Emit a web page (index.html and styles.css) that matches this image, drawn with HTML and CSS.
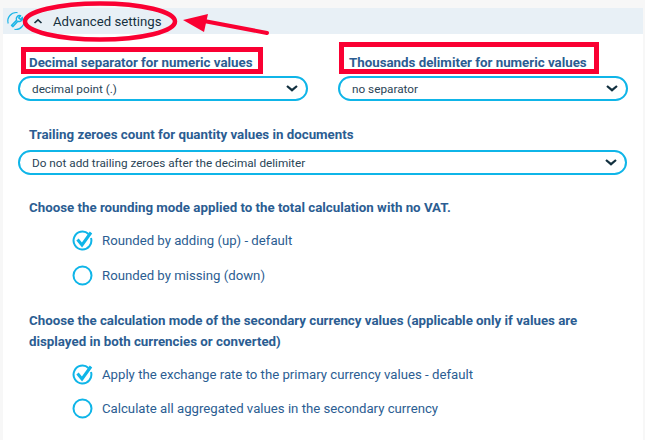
FILE: index.html
```html
<!DOCTYPE html>
<html lang="en">
<head>
<meta charset="utf-8">
<title>Advanced settings</title>
<link rel="stylesheet" href="styles.css">
</head>
<body>
<main class="panel">
  <header class="bar">
    <svg class="wrench" width="20" height="20" viewBox="0 0 20 20" fill="none">
      <path d="M2.2 12.5A8.5 8.5 0 0 1 11.5 1.6" stroke="#1cb5e6" stroke-width="1.2"/>
      <path d="M17.8 7.5A8.5 8.5 0 0 1 8.5 18.4" stroke="#1cb5e6" stroke-width="1.2"/>
      <path d="M5.5 14.5L10.5 9.2A3.3 3.3 0 0 1 14.6 4.8L12.7 6.9L14.6 8.4L16.3 6.4A3.3 3.3 0 0 1 11.8 10.3L7 15.6Z" stroke="#1cb5e6" stroke-width="1.5" stroke-linejoin="round"/>
    </svg>
    <svg class="caret" width="10" height="6" viewBox="0 0 10 6" fill="none"><path d="M1.5 5L5 1.8L8.5 5" stroke="#16303f" stroke-width="1.6"/></svg>
    <span class="bar-title">Advanced settings</span>
  </header>

  <div class="columns">
    <div class="field">
      <label class="label">Decimal separator for numeric values</label>
      <div class="select"><span>decimal point (.)</span><svg class="chev" width="12" height="7" viewBox="0 0 12 7" fill="none"><path d="M1 1L6 5.2L11 1" stroke="#12303f" stroke-width="2.2"/></svg></div>
    </div>
    <div class="field">
      <label class="label">Thousands delimiter for numeric values</label>
      <div class="select"><span>no separator</span><svg class="chev" width="12" height="7" viewBox="0 0 12 7" fill="none"><path d="M1 1L6 5.2L11 1" stroke="#12303f" stroke-width="2.2"/></svg></div>
    </div>
  </div>

  <div class="field wide">
    <label class="label">Trailing zeroes count for quantity values in documents</label>
    <div class="select"><span>Do not add trailing zeroes after the decimal delimiter</span><svg class="chev" width="12" height="7" viewBox="0 0 12 7" fill="none"><path d="M1 1L6 5.2L11 1" stroke="#12303f" stroke-width="2.2"/></svg></div>
  </div>

  <section class="group first">
    <p class="label">Choose the rounding mode applied to the total calculation with no VAT.</p>
    <div class="options">
      <div class="option">
        <svg class="radio" width="21" height="21" viewBox="0 0 21 21" fill="none"><path d="M16.5 4A8.9 8.9 0 1 0 19 8" stroke="#0fb5e8" stroke-width="2"/><path d="M5.5 9.5L10 15L19 2.5" stroke="#0fb5e8" stroke-width="3"/></svg>
        <span>Rounded by adding (up) - default</span>
      </div>
      <div class="option">
        <svg class="radio" width="21" height="21" viewBox="0 0 21 21" fill="none"><circle cx="10.5" cy="10.5" r="9" stroke="#0fb5e8" stroke-width="2"/></svg>
        <span>Rounded by missing (down)</span>
      </div>
    </div>
  </section>

  <section class="group second">
    <p class="label">Choose the calculation mode of the secondary currency values (applicable only if values are displayed in both currencies or converted)</p>
    <div class="options">
      <div class="option">
        <svg class="radio" width="21" height="21" viewBox="0 0 21 21" fill="none"><path d="M16.5 4A8.9 8.9 0 1 0 19 8" stroke="#0fb5e8" stroke-width="2"/><path d="M5.5 9.5L10 15L19 2.5" stroke="#0fb5e8" stroke-width="3"/></svg>
        <span>Apply the exchange rate to the primary currency values - default</span>
      </div>
      <div class="option">
        <svg class="radio" width="21" height="21" viewBox="0 0 21 21" fill="none"><circle cx="10.5" cy="10.5" r="9" stroke="#0fb5e8" stroke-width="2"/></svg>
        <span>Calculate all aggregated values in the secondary currency</span>
      </div>
    </div>
  </section>
</main>

<svg class="notes" width="645" height="80" viewBox="0 0 645 80" fill="none">
  <ellipse cx="100" cy="21.5" rx="75" ry="18" stroke="#fa0032" stroke-width="4.5"/>
  <path d="M267 33L204 21" stroke="#fa0032" stroke-width="4" stroke-linecap="round"/>
  <path d="M183 20L208 14L204 32Z" fill="#fa0032"/>
  <rect x="23.5" y="49.5" width="237" height="22" stroke="#fa0032" stroke-width="5"/>
  <rect x="341.5" y="44.5" width="255" height="27" stroke="#fa0032" stroke-width="5"/>
</svg>
</body>
</html>
```
FILE: styles.css
```css
* { box-sizing: border-box; }
html, body { margin: 0; padding: 0; }
body {
  width: 645px;
  height: 440px;
  overflow: hidden;
  background: #f7f7f7;
  padding: 8px 2px 0 3px;
  position: relative;
  font-family: "Roboto", "Liberation Sans", sans-serif;
}
.panel {
  background: #fff;
  height: 432px;
}
.bar {
  height: 26px;
  background: #e8f0f6;
  display: flex;
  align-items: center;
  padding-left: 3px;
}
.wrench { flex: none; }
.caret { margin-left: 7px; flex: none; }
.bar-title {
  margin-left: 10px;
  font-size: 13.2px;
  color: #16303f;
}
.columns {
  display: grid;
  grid-template-columns: 290px 290px;
  column-gap: 30px;
  padding: 0 0 0 15px;
  margin-top: 18px;
}
.field { display: flex; flex-direction: column; }
.wide { margin: 23px 16px 0 15px; }
.wide .select { margin-top: 5px; }
.label {
  margin: 0;
  padding-left: 11px;
  font-size: 13.3px;
  line-height: 21px;
  font-weight: 700;
  color: #2b5d92;
}
.select {
  margin-top: 3px;
  height: 25px;
  border: 2px solid #0fb5e8;
  border-radius: 13px;
  display: flex;
  align-items: center;
  justify-content: space-between;
  padding: 0 8px 0 12px;
  font-size: 11.75px;
  color: #2a4456;
  background: #fff;
}
.group { margin-left: 26px; margin-right: 40px; }
.group .label { padding-left: 0; }
.first { margin-top: 22px; }
.second { margin-top: 17px; }
.options { padding-left: 43px; }
.option {
  display: flex;
  align-items: center;
  gap: 9px;
  height: 35px;
  font-size: 13.2px;
  color: #2b5d92;
}
.first .options { margin-top: 5px; }
.second .options { margin-top: 5px; }
.second .option { height: 34px; }
.notes {
  position: absolute;
  left: 0;
  top: 0;
  pointer-events: none;
}
```
